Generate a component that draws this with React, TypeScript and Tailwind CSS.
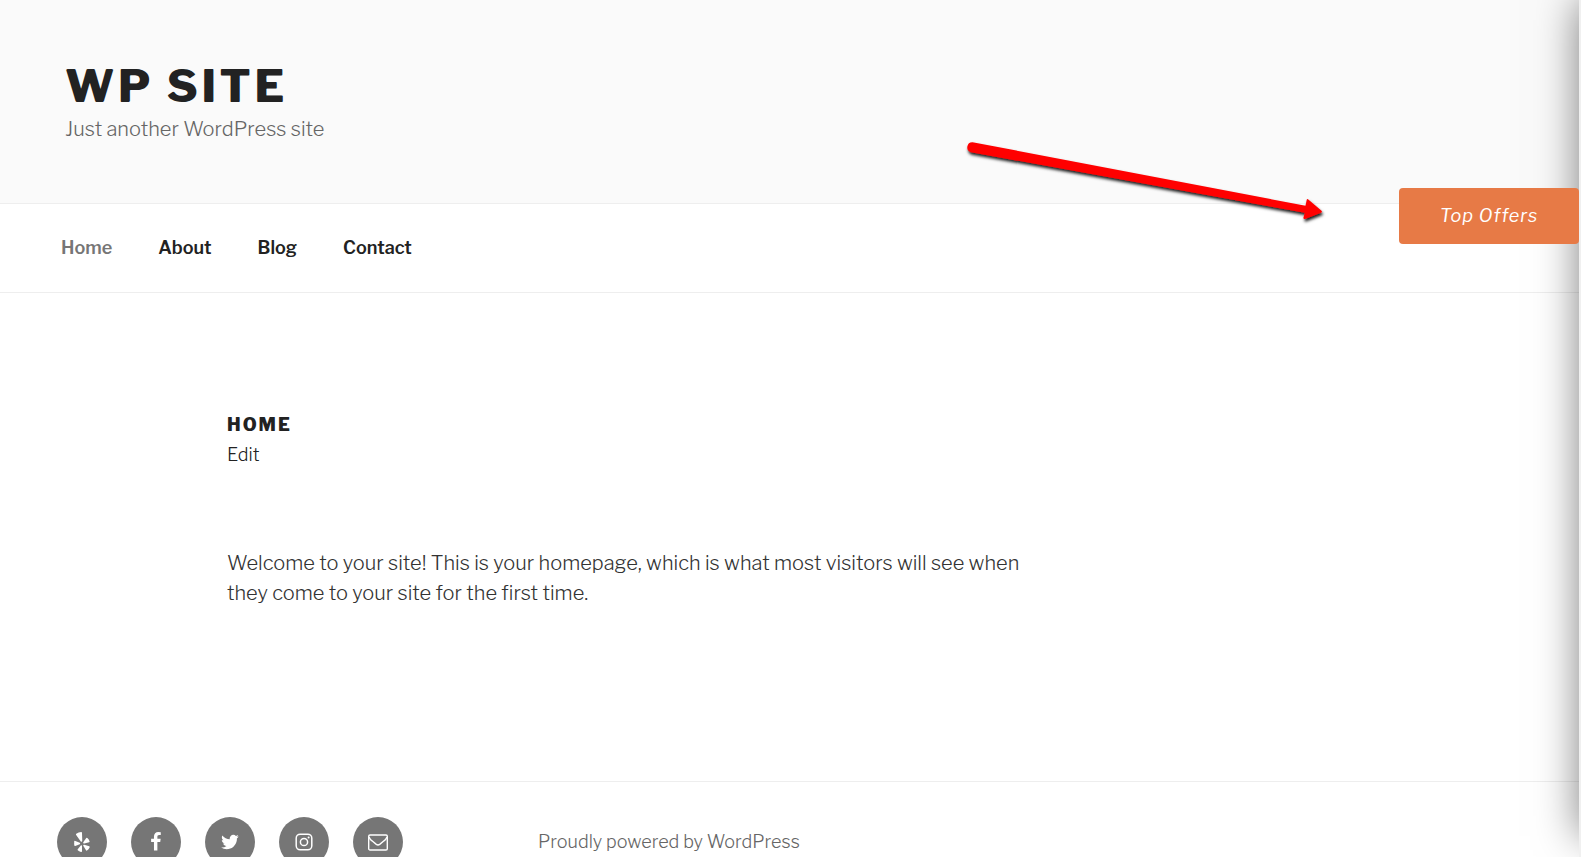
import type { ReactNode } from "react";

const navItems = ["Home", "About", "Blog", "Contact"];

const socialLinks: { label: string; icon: ReactNode }[] = [
  {
    label: "Yelp",
    icon: (
      <svg viewBox="0 0 32 40" className="h-5 w-4" fill="currentColor" aria-hidden="true">
        <path d="M4.500 3.500Q9 .2 14.500 0Q16 .2 16 2L16.500 17.500Q16 20.500 13.500 19L4 5.500Q3.600 4.300 4.500 3.500Z" />
        <path d="M1.500 17.500L11.500 21.500Q13.500 23 11.500 24.500L2.500 28Q.8 28.300 .5 26.500Q0 22 .6 18.500Q.8 17.400 1.500 17.500Z" />
        <path d="M13.500 27Q16 25.500 16 28V38.500Q15.800 40.200 14 40Q10 39 7.500 36.500Q6.800 35.500 7.500 34.500Z" />
        <path d="M18.500 27.500Q18 25 20.500 25.500L30.500 28.700Q32 29.500 31.200 31Q29.500 34.700 26 37Q24.800 37.700 24 36.500Z" />
        <path d="M18.500 20.500L24.500 12Q25.500 11 26.700 12Q29.800 14.800 31.200 18.700Q31.500 20 30.300 20.500L20.500 23Q17.500 23.200 18.500 20.500Z" />
      </svg>
    ),
  },
  {
    label: "Facebook",
    icon: (
      <svg viewBox="0 0 19 32" className="h-5 w-3" fill="currentColor" aria-hidden="true">
        <path d="M17.125 0.214v4.714h-2.804q-1.536 0-2.071 0.643t-0.536 1.929v3.375h5.232l-0.696 5.286h-4.536v13.554h-5.464v-13.554h-4.554v-5.286h4.554v-3.893q0-3.321 1.857-5.152t4.946-1.830q2.625 0 4.071 0.214z" />
      </svg>
    ),
  },
  {
    label: "Twitter",
    icon: (
      <svg viewBox="0 0 30 32" className="h-5 w-5" fill="currentColor" aria-hidden="true">
        <path d="M28.929 7.286q-1.196 1.750-2.893 2.982 0.018 0.250 0.018 0.750 0 2.321-0.679 4.634t-2.063 4.437-3.295 3.759-4.607 2.607-5.768 0.973q-4.839 0-8.857-2.589 0.625 0.071 1.393 0.071 4.018 0 7.161-2.464-1.875-0.036-3.357-1.152t-2.036-2.848q0.589 0.089 1.089 0.089 0.768 0 1.518-0.196-2-0.411-3.313-1.991t-1.313-3.670v-0.071q1.214 0.679 2.607 0.732-1.179-0.786-1.875-2.054t-0.696-2.750q0-1.571 0.786-2.911 2.161 2.661 5.259 4.259t6.634 1.777q-0.143-0.679-0.143-1.321 0-2.393 1.688-4.080t4.080-1.688q2.500 0 4.214 1.821 1.946-0.375 3.661-1.393-0.661 2.054-2.536 3.179 1.661-0.179 3.321-0.893z" />
      </svg>
    ),
  },
  {
    label: "Instagram",
    icon: (
      <svg viewBox="0 0 20 20" className="h-5 w-5" fill="none" stroke="currentColor" strokeWidth="1.500" aria-hidden="true">
        <rect x="2.200" y="2.200" width="15.600" height="15.600" rx="4" />
        <circle cx="10" cy="10" r="3.600" />
        <circle cx="14.600" cy="5.400" r="1" fill="currentColor" stroke="none" />
      </svg>
    ),
  },
  {
    label: "Email",
    icon: (
      <svg viewBox="0 0 20 20" className="h-5 w-5" fill="none" stroke="currentColor" strokeWidth="1.400" aria-hidden="true">
        <rect x=".7" y="3" width="18.600" height="15" rx="1.300" />
        <path d="M1 5Q2 7.500 4 8.800L8.300 12.400Q10 13.500 11.700 12.400L16 8.800Q18 7.500 19 5" />
      </svg>
    ),
  },
];

function Header() {
  return (
    <header className="border-b border-[#eeeeee] bg-[#fafafa] px-[65px] pt-[61px] pb-[57px]">
      <h1 className="text-[45px] leading-[50px] font-extrabold tracking-[0.08em] text-[#222222] uppercase">
        WP Site
      </h1>
      <p className="mt-0.5 text-xl leading-[33px] font-light text-[#666666]">Just another WordPress site</p>
    </header>
  );
}

function Navigation() {
  return (
    <nav className="border-b border-[#eeeeee] px-[61px] py-[29px]" aria-label="Main">
      <ul className="flex gap-[46px] text-lg leading-[30px] font-semibold text-[#222222]">
        {navItems.map((item) => (
          <li key={item}>
            <a href="#" className={item === "Home" ? "text-[#767676]" : ""}>
              {item}
            </a>
          </li>
        ))}
      </ul>
    </nav>
  );
}

function Footer() {
  return (
    <footer className="flex items-center border-t border-[#eeeeee] px-[57px] pt-[35px]">
      <ul className="flex w-[481px] gap-6">
        {socialLinks.map(({ label, icon }) => (
          <li key={label}>
            <a
              href="#"
              aria-label={label}
              className="flex size-[50px] items-center justify-center rounded-full bg-[#767676] text-white"
            >
              {icon}
            </a>
          </li>
        ))}
      </ul>
      <a href="#" className="text-lg font-light text-[#666666]">
        Proudly powered by WordPress
      </a>
    </footer>
  );
}

function Arrow() {
  return (
    <svg
      viewBox="0 0 370 90"
      className="pointer-events-none absolute top-[138px] right-[251px] h-[90px] w-[370px]"
      aria-hidden="true"
    >
      <defs>
        <filter id="arrow-shadow" x="-10%" y="-20%" width="120%" height="150%">
          <feDropShadow dx="1" dy="2.500" stdDeviation="1.500" floodColor="#000000" floodOpacity=".9" />
        </filter>
      </defs>
      <path
        d="M12.500 4.200L345.500 67.800L346.800 61.500Q347.300 60.800 348 61.300L361.500 72.800Q362.500 74 361 74.800L345 81Q343 81.200 343.500 79.500L344.800 74.800L11 14.200A5.100 5.100 0 0 1 12.500 4.200Z"
        fill="#ff0000"
        filter="url(#arrow-shadow)"
      />
    </svg>
  );
}

export default function App() {
  return (
    <div className="relative h-screen overflow-hidden bg-white font-['Libre_Franklin','Inter',sans-serif]">
      <Header />
      <Navigation />
      <main className="px-[227px] pt-[117px] pb-[173px] text-[#333333]">
        <h2 className="text-lg leading-[30px] font-extrabold tracking-[2px] text-[#222222] uppercase">Home</h2>
        <a href="#" className="text-lg leading-[30px] font-light text-[#222222]">
          Edit
        </a>
        <p className="mt-[78px] max-w-[830px] text-xl leading-[30px] font-light">
          Welcome to your site! This is your homepage, which is what most visitors will see when they come to your
          site for the first time.
        </p>
      </main>
      <Footer />
      <div className="pointer-events-none absolute top-0 -right-[398px] h-[836px] w-[400px] shadow-[0_0_40px_rgba(0,0,0,0.5)]" />
      <div className="pointer-events-none absolute inset-y-0 right-0 w-0.5 bg-[#f0f0f0]" />
      <Arrow />
      <button
        type="button"
        className="absolute top-[188px] right-[2px] h-14 w-[180px] rounded bg-[#e77a46] text-lg tracking-[1px] text-white italic"
      >
        Top Offers
      </button>
    </div>
  );
}
